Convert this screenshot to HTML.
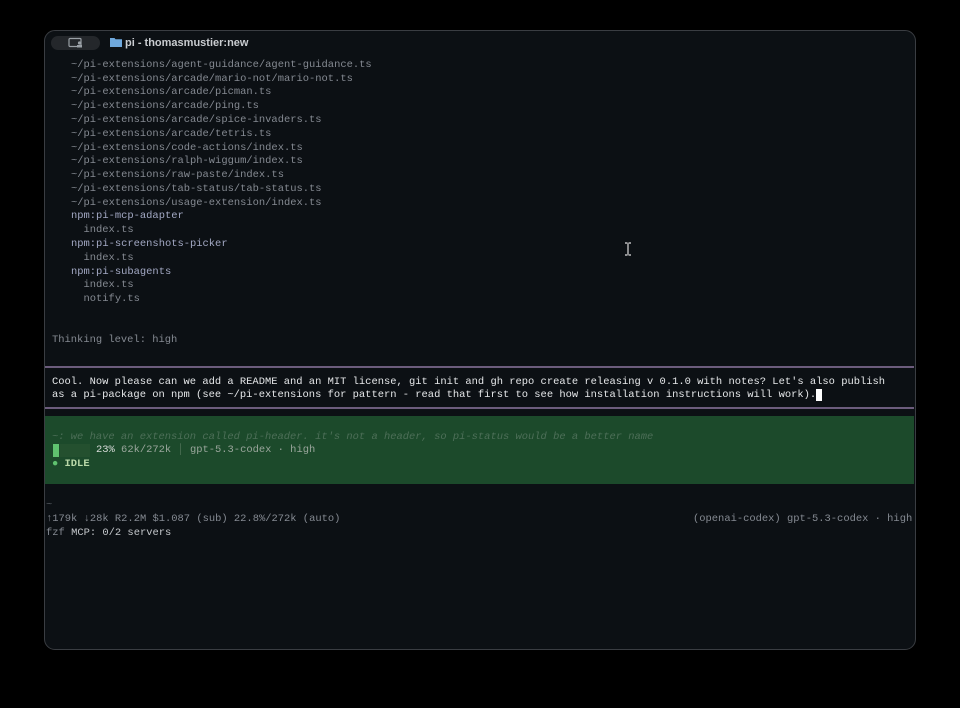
<!DOCTYPE html>
<html><head><meta charset="utf-8"><style>
*{margin:0;padding:0;box-sizing:border-box}
body{width:960px;height:708px;background:#000;position:relative;overflow:hidden;font-family:"Liberation Mono",monospace;font-size:10.45px}
.win{position:absolute;left:44px;top:30px;width:872px;height:620px;background:#0c1014;border:1px solid #3a3d42;border-radius:11px;overflow:hidden}
.c{position:absolute;left:0;top:1.5px;width:872px;height:620px}
.l{position:absolute;white-space:pre;line-height:13px;color:#858a92}
.npm{color:#a3a9c4}
.w{color:#e6e8ea}
.sep{position:absolute;left:0;width:869px;height:2px;background:#6c5c7c}
.green{position:absolute;left:0;top:383px;width:869px;height:68px;background:#1c4a2b}
</style></head><body>
<div class="win">
 <div style="position:absolute;left:6px;top:5px;width:49px;height:14px;border-radius:7px;background:#24272b"></div>
 <svg style="position:absolute;left:23px;top:6px" width="16" height="12" viewBox="0 0 16 12"><rect x="1" y="1.5" width="12" height="8" rx="1" fill="none" stroke="#9aa0a6" stroke-width="1.2"/><circle cx="11.5" cy="6" r="1.6" fill="#9aa0a6"/><rect x="9" y="8" width="5" height="2.5" fill="#9aa0a6"/></svg>
 <svg style="position:absolute;left:65px;top:6px" width="12" height="10" viewBox="0 0 12 10"><path d="M0 1h4.5l1 1.2H12V10H0z" fill="#6fa8dc"/></svg>
 <div style="position:absolute;left:80px;top:6px;font-family:'Liberation Sans',sans-serif;font-size:11px;font-weight:bold;color:#c9ccd0;white-space:pre">pi - thomasmustier:new</div>
<div class="c">
 <div class="l" style="left:26px;top:26px">~/pi-extensions/agent-guidance/agent-guidance.ts</div>
 <div class="l" style="left:26px;top:40px">~/pi-extensions/arcade/mario-not/mario-not.ts</div>
 <div class="l" style="left:26px;top:53.5px">~/pi-extensions/arcade/picman.ts</div>
 <div class="l" style="left:26px;top:67px">~/pi-extensions/arcade/ping.ts</div>
 <div class="l" style="left:26px;top:81px">~/pi-extensions/arcade/spice-invaders.ts</div>
 <div class="l" style="left:26px;top:95px">~/pi-extensions/arcade/tetris.ts</div>
 <div class="l" style="left:26px;top:109px">~/pi-extensions/code-actions/index.ts</div>
 <div class="l" style="left:26px;top:122px">~/pi-extensions/ralph-wiggum/index.ts</div>
 <div class="l" style="left:26px;top:136px">~/pi-extensions/raw-paste/index.ts</div>
 <div class="l" style="left:26px;top:150px">~/pi-extensions/tab-status/tab-status.ts</div>
 <div class="l" style="left:26px;top:164px">~/pi-extensions/usage-extension/index.ts</div>
 <div class="l npm" style="left:26px;top:177px">npm:pi-mcp-adapter</div>
 <div class="l" style="left:38.5px;top:191px">index.ts</div>
 <div class="l npm" style="left:26px;top:205px">npm:pi-screenshots-picker</div>
 <div class="l" style="left:38.5px;top:219px">index.ts</div>
 <div class="l npm" style="left:26px;top:233px">npm:pi-subagents</div>
 <div class="l" style="left:38.5px;top:246px">index.ts</div>
 <div class="l" style="left:38.5px;top:260px">notify.ts</div>
 <div class="l" style="left:7px;top:301px">Thinking level: high</div>

 <div class="sep" style="top:333px"></div>
 <div class="l w" style="left:7px;top:343px">Cool. Now please can we add a README and an MIT license, git init and gh repo create releasing v 0.1.0 with notes? Let's also publish</div>
 <div class="l w" style="left:7px;top:356px">as a pi-package on npm (see ~/pi-extensions for pattern - read that first to see how installation instructions will work).<span style="background:#fff;color:#fff">.</span></div>
 <div class="sep" style="top:374px"></div>

 <div class="green"></div>
 <div class="l" style="left:7px;top:398px;color:#4d6f58;font-style:italic">~: we have an extension called pi-header. it's not a header, so pi-status would be a better name</div>
 <div style="position:absolute;left:8px;top:411px;width:6px;height:13px;background:#5fc26f"></div>
 <div style="position:absolute;left:15px;top:411px;width:30px;height:13px;background:#24502f"></div>
 <div class="l" style="left:51px;top:411px;color:#9aa69c"><span style="color:#d8dcd9">23%</span> 62k/272k <span style="color:#4f7358">│</span> gpt-5.3-codex · high</div>
 <div class="l" style="left:7px;top:425px;color:#b9d8a8;font-weight:bold"><span style="color:#5fc26f">●</span> IDLE</div>

 <div class="l" style="left:1px;top:466px;color:#555a60">~</div>
 <div class="l" style="left:1px;top:480px">↑179k ↓28k R2.2M $1.087 (sub) 22.8%/272k (auto)</div>
 <div class="l" style="left:648px;top:480px">(openai-codex) gpt-5.3-codex · high</div>
 <div class="l" style="left:1px;top:494px"><span>fzf</span> <span style="color:#c5c8cc">MCP: 0/2 servers</span></div>
</div>
</div>
<svg style="position:absolute;left:623px;top:242px" width="10" height="14" viewBox="0 0 10 14"><path d="M2 1h2.5M5.5 1H8M5 1.5v11M2 13h2.5M5.5 13H8" stroke="#ddd" stroke-width="1.2" fill="none"/></svg>
</body></html>
